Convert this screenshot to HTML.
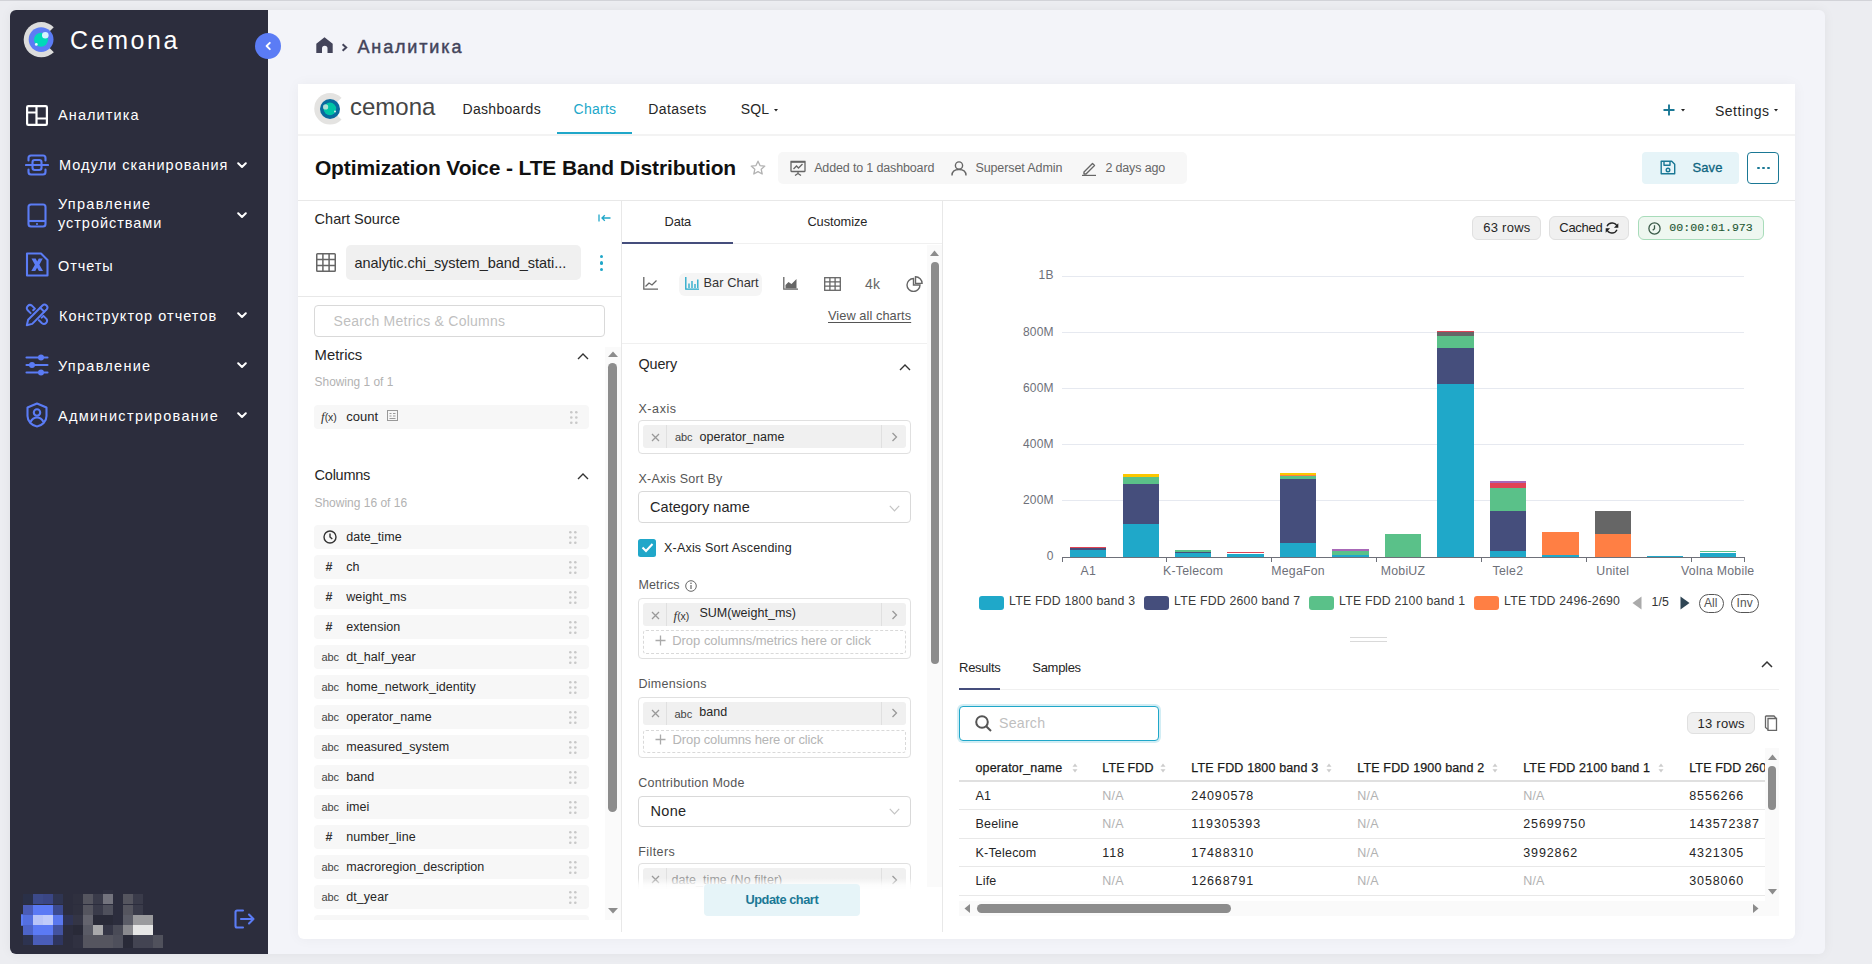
<!DOCTYPE html>
<html><head><meta charset="utf-8"><title>Cemona - Chart</title>
<style>
*{box-sizing:border-box;margin:0;padding:0}
html,body{width:1872px;height:964px;overflow:hidden}
body{background:#ecedf1;font-family:"Liberation Sans",sans-serif;position:relative}
.a{position:absolute}
.t{position:absolute;white-space:nowrap}
</style></head><body>
<div class="a" style="left:0px;top:0px;width:1872px;height:1px;background:#d2d3d8;"></div>
<div class="a" style="left:10px;top:10px;width:1815px;height:944px;background:#f3f4f9;border-radius:6px;box-shadow:0 0 12px rgba(0,0,0,0.05);"></div>
<div class="a" style="left:10px;top:10px;width:258px;height:944px;background:#2c2d3d;border-radius:6px 0 0 6px;"></div>
<svg class="a" style="left:20px;top:20px;" width="42" height="40" viewBox="0 0 42 40"><circle cx="21.3" cy="19.7" r="17.6" fill="#dcdcdc"/><path d="M21.3 19.7 L42 -1 L42 40.4 Z" fill="#2c2d3d"/>
<circle cx="21.1" cy="19.6" r="12.4" fill="#5b7cf5"/><circle cx="21" cy="19.8" r="7" fill="#00d9b9"/>
<circle cx="25.3" cy="15.3" r="3.3" fill="#d4f3ff"/><circle cx="16.3" cy="24.4" r="1.4" fill="#e6fbff"/></svg>
<div class="t" style="left:70px;top:28.04px;font-size:25px;line-height:25px;color:#ffffff;letter-spacing:2.6px;">Cemona</div>
<svg class="a" style="left:26px;top:105px;" width="22" height="21" viewBox="0 0 22 21"><g fill="none" stroke="#fff" stroke-width="2.2" stroke-linejoin="round"><rect x="1.1" y="1.1" width="19.8" height="18.8" rx="1.2"/><path d="M10.5 1.1v18.8M10.5 13.5h10.4M1.1 7.5h9.4"/></g></svg>
<div class="t" style="left:58px;top:108.13px;font-size:14.5px;line-height:14.5px;color:#fff;letter-spacing:1.1px;">Аналитика</div>
<svg class="a" style="left:25px;top:154px;" width="24" height="22" viewBox="0 0 24 22"><g fill="none" stroke="#5b7cf5" stroke-width="2.1" stroke-linecap="round" stroke-linejoin="round"><path d="M3.5 6.5V4a2.5 2.5 0 0 1 2.5-2.5h12A2.5 2.5 0 0 1 20.5 4v2.5M3.5 15.5V18a2.5 2.5 0 0 0 2.5 2.5h12a2.5 2.5 0 0 0 2.5-2.5v-2.5"/><rect x="7.5" y="6" width="9" height="10" rx="2.2"/><path d="M1 11h22"/></g></svg>
<div class="t" style="left:59px;top:158.23px;font-size:14.5px;line-height:14.5px;color:#fff;letter-spacing:1.04px;">Модули сканирования</div>
<svg class="a" style="left:237px;top:162px;" width="10" height="7" viewBox="0 0 10 7"><path d="M1.2 1.2L5 5 8.8 1.2" fill="none" stroke="#fff" stroke-width="2" stroke-linecap="round" stroke-linejoin="round"/></svg>
<svg class="a" style="left:27px;top:203px;" width="20" height="25" viewBox="0 0 20 25"><g fill="none" stroke="#5b7cf5" stroke-width="2.1" stroke-linejoin="round"><rect x="1.5" y="1.5" width="17" height="22" rx="2.5"/><path d="M1.5 18h17"/></g><circle cx="10" cy="21" r="1.1" fill="#5b7cf5"/></svg>
<div class="t" style="left:58px;top:197.23px;font-size:14.5px;line-height:14.5px;color:#fff;letter-spacing:1.28px;">Управление</div>
<div class="t" style="left:58px;top:216.33px;font-size:14.5px;line-height:14.5px;color:#fff;letter-spacing:0.96px;">устройствами</div>
<svg class="a" style="left:237px;top:212px;" width="10" height="7" viewBox="0 0 10 7"><path d="M1.2 1.2L5 5 8.8 1.2" fill="none" stroke="#fff" stroke-width="2" stroke-linecap="round" stroke-linejoin="round"/></svg>
<svg class="a" style="left:25px;top:252px;" width="24" height="25" viewBox="0 0 24 25"><g fill="none" stroke="#5b7cf5" stroke-width="2.1" stroke-linejoin="round"><path d="M2 1.5h14l6.5 6.5v15.5H2z"/></g><path d="M6.5 6.5h4.2l1.5 3 1.6-3h4l-3.4 6.2 3.6 6.3h-4.1l-1.8-3.3-1.8 3.3H6.3l3.6-6.3z" fill="#5b7cf5"/></svg>
<div class="t" style="left:58px;top:258.53px;font-size:14.5px;line-height:14.5px;color:#fff;letter-spacing:0.9px;">Отчеты</div>
<svg class="a" style="left:25px;top:303px;" width="24" height="24" viewBox="0 0 24 24"><g fill="none" stroke="#5b7cf5" stroke-width="2" stroke-linecap="round" stroke-linejoin="round"><path d="M1.8 22.2L3.13 16.77L17.45 2.45A2.9 2.9 0 0 1 21.55 6.55L7.23 20.87Z"/><path d="M15.19 4.71L19.29 8.81"/><path d="M5.6 10.1L2.5 7A3.15 3.15 0 0 1 6.9 2.6L9.9 5.6L8.2 7.3"/><path d="M13.9 17.2L17 20.3A3.15 3.15 0 0 0 21.4 15.9L18.4 12.9L16.7 14.6"/></g></svg>
<div class="t" style="left:59px;top:308.73px;font-size:14.5px;line-height:14.5px;color:#fff;letter-spacing:1.04px;">Конструктор отчетов</div>
<svg class="a" style="left:237px;top:312px;" width="10" height="7" viewBox="0 0 10 7"><path d="M1.2 1.2L5 5 8.8 1.2" fill="none" stroke="#fff" stroke-width="2" stroke-linecap="round" stroke-linejoin="round"/></svg>
<svg class="a" style="left:25px;top:354px;" width="24" height="22" viewBox="0 0 24 22"><g fill="none" stroke="#5b7cf5" stroke-width="2.1" stroke-linecap="round"><path d="M1.5 3.5h21M1.5 11h21M1.5 18.5h21"/></g><g fill="#5b7cf5"><circle cx="16" cy="3.5" r="3"/><circle cx="7" cy="11" r="3"/><circle cx="16" cy="18.5" r="3"/></g></svg>
<div class="t" style="left:58px;top:358.73px;font-size:14.5px;line-height:14.5px;color:#fff;letter-spacing:1.28px;">Управление</div>
<svg class="a" style="left:237px;top:362px;" width="10" height="7" viewBox="0 0 10 7"><path d="M1.2 1.2L5 5 8.8 1.2" fill="none" stroke="#fff" stroke-width="2" stroke-linecap="round" stroke-linejoin="round"/></svg>
<svg class="a" style="left:26px;top:402px;" width="22" height="26" viewBox="0 0 22 26"><g fill="none" stroke="#5b7cf5" stroke-width="2.1" stroke-linejoin="round"><path d="M11 1.5L20.5 5.5v8.5c0 5.5-4.5 9.5-9.5 10.5C6 23.5 1.5 19.5 1.5 14V5.5z"/><circle cx="11" cy="10.5" r="3.2"/><path d="M4.5 20c1.5-3 3.8-4.5 6.5-4.5s5 1.5 6.5 4.5"/></g></svg>
<div class="t" style="left:58px;top:408.73px;font-size:14.5px;line-height:14.5px;color:#fff;letter-spacing:1.34px;">Администрирование</div>
<svg class="a" style="left:237px;top:412px;" width="10" height="7" viewBox="0 0 10 7"><path d="M1.2 1.2L5 5 8.8 1.2" fill="none" stroke="#fff" stroke-width="2" stroke-linecap="round" stroke-linejoin="round"/></svg>
<div class="a" style="left:23px;top:894.3px;width:10px;height:10.2px;background:#2a3048;"></div>
<div class="a" style="left:33px;top:894.3px;width:10px;height:10.2px;background:#3c4a8a;"></div>
<div class="a" style="left:43px;top:894.3px;width:10px;height:10.2px;background:#3a4685;"></div>
<div class="a" style="left:53px;top:894.3px;width:10px;height:10.2px;background:#2f3552;"></div>
<div class="a" style="left:23px;top:904.5px;width:10px;height:10.1px;background:#4a5cb8;"></div>
<div class="a" style="left:33px;top:904.5px;width:10px;height:10.1px;background:#5b7af5;"></div>
<div class="a" style="left:43px;top:904.5px;width:10px;height:10.1px;background:#5b7af5;"></div>
<div class="a" style="left:53px;top:904.5px;width:10px;height:10.1px;background:#3b4a90;"></div>
<div class="a" style="left:23px;top:914.6px;width:10px;height:10.0px;background:#5470e0;"></div>
<div class="a" style="left:33px;top:914.6px;width:10px;height:10.0px;background:#b8c4f8;"></div>
<div class="a" style="left:43px;top:914.6px;width:10px;height:10.0px;background:#c0cbfa;"></div>
<div class="a" style="left:53px;top:914.6px;width:10px;height:10.0px;background:#5a78ef;"></div>
<div class="a" style="left:23px;top:924.6px;width:10px;height:10.1px;background:#4d64c8;"></div>
<div class="a" style="left:33px;top:924.6px;width:10px;height:10.1px;background:#5b7af5;"></div>
<div class="a" style="left:43px;top:924.6px;width:10px;height:10.1px;background:#5b7af5;"></div>
<div class="a" style="left:53px;top:924.6px;width:10px;height:10.1px;background:#4353a0;"></div>
<div class="a" style="left:23px;top:934.7px;width:10px;height:10.1px;background:#2d3350;"></div>
<div class="a" style="left:33px;top:934.7px;width:10px;height:10.1px;background:#4a5db8;"></div>
<div class="a" style="left:43px;top:934.7px;width:10px;height:10.1px;background:#4a5db8;"></div>
<div class="a" style="left:53px;top:934.7px;width:10px;height:10.1px;background:#2f3660;"></div>
<div class="a" style="left:63px;top:914.6px;width:10px;height:10px;background:#2f3455;"></div>
<div class="a" style="left:21px;top:914px;width:1.6px;height:12px;background:#5b7cf5;border-radius:1px;"></div>
<div class="a" style="left:73px;top:894.3px;width:10px;height:10.2px;background:#2f303f;"></div>
<div class="a" style="left:73px;top:904.5px;width:10px;height:10.1px;background:#2f303f;"></div>
<div class="a" style="left:73px;top:914.6px;width:10px;height:10.0px;background:#343545;"></div>
<div class="a" style="left:73px;top:924.6px;width:10px;height:10.1px;background:#292a38;"></div>
<div class="a" style="left:73px;top:934.7px;width:10px;height:13.1px;background:#303141;"></div>
<div class="a" style="left:83px;top:894.3px;width:10px;height:10.2px;background:#55555f;"></div>
<div class="a" style="left:83px;top:904.5px;width:10px;height:10.1px;background:#55555f;"></div>
<div class="a" style="left:83px;top:914.6px;width:10px;height:10.0px;background:#64646e;"></div>
<div class="a" style="left:83px;top:924.6px;width:10px;height:10.1px;background:#5a5b66;"></div>
<div class="a" style="left:83px;top:934.7px;width:10px;height:13.1px;background:#55555f;"></div>
<div class="a" style="left:93px;top:894.3px;width:10px;height:10.2px;background:#3a3b4a;"></div>
<div class="a" style="left:93px;top:904.5px;width:10px;height:10.1px;background:#3a3b4a;"></div>
<div class="a" style="left:93px;top:914.6px;width:10px;height:10.0px;background:#292a38;"></div>
<div class="a" style="left:93px;top:924.6px;width:10px;height:10.1px;background:#a9a9ab;"></div>
<div class="a" style="left:93px;top:934.7px;width:10px;height:13.1px;background:#55555f;"></div>
<div class="a" style="left:103px;top:894.3px;width:10px;height:10.2px;background:#73737d;"></div>
<div class="a" style="left:103px;top:904.5px;width:10px;height:10.1px;background:#4f505c;"></div>
<div class="a" style="left:103px;top:914.6px;width:10px;height:10.0px;background:#292a38;"></div>
<div class="a" style="left:103px;top:924.6px;width:10px;height:10.1px;background:#353646;"></div>
<div class="a" style="left:103px;top:934.7px;width:10px;height:13.1px;background:#55555f;"></div>
<div class="a" style="left:113px;top:924.6px;width:10px;height:10.1px;background:#4a4b57;"></div>
<div class="a" style="left:113px;top:934.7px;width:10px;height:13.1px;background:#4e4f5b;"></div>
<div class="a" style="left:123px;top:894.3px;width:10px;height:10.2px;background:#55555f;"></div>
<div class="a" style="left:123px;top:904.5px;width:10px;height:10.1px;background:#55555f;"></div>
<div class="a" style="left:123px;top:914.6px;width:10px;height:10.0px;background:#5b5c67;"></div>
<div class="a" style="left:123px;top:924.6px;width:10px;height:10.1px;background:#8a8a8f;"></div>
<div class="a" style="left:123px;top:934.7px;width:10px;height:13.1px;background:#292a38;"></div>
<div class="a" style="left:133px;top:894.3px;width:10px;height:10.2px;background:#3a3b4a;"></div>
<div class="a" style="left:133px;top:904.5px;width:10px;height:10.1px;background:#3a3b4a;"></div>
<div class="a" style="left:133px;top:914.6px;width:10px;height:10.0px;background:#9a9a9d;"></div>
<div class="a" style="left:133px;top:924.6px;width:10px;height:10.1px;background:#e6e6e6;"></div>
<div class="a" style="left:133px;top:934.7px;width:10px;height:13.1px;background:#434452;"></div>
<div class="a" style="left:143px;top:914.6px;width:10px;height:10.0px;background:#9a9a9d;"></div>
<div class="a" style="left:143px;top:924.6px;width:10px;height:10.1px;background:#e6e6e6;"></div>
<div class="a" style="left:143px;top:934.7px;width:10px;height:13.1px;background:#434452;"></div>
<div class="a" style="left:153px;top:934.7px;width:10px;height:13.1px;background:#50515c;"></div>
<div class="a" style="left:103px;top:890.3px;width:10px;height:4px;background:#303141;"></div>
<svg class="a" style="left:234px;top:909px;" width="21" height="20" viewBox="0 0 21 20"><g fill="none" stroke="#5b7cf5" stroke-width="2.1" stroke-linecap="round" stroke-linejoin="round"><path d="M9 1.5H3a1.5 1.5 0 0 0-1.5 1.5v14A1.5 1.5 0 0 0 3 18.5h6"/><path d="M7 10h12.5M15 5.5l4.5 4.5-4.5 4.5"/></g></svg>
<div class="a" style="left:255px;top:33px;width:26px;height:26px;border-radius:50%;background:#5b7cf5"></div>
<svg class="a" style="left:264px;top:41px;" width="8" height="10" viewBox="0 0 8 10"><path d="M5.8 1.8L2.6 5l3.2 3.2" fill="none" stroke="#fff" stroke-width="1.9" stroke-linecap="round" stroke-linejoin="round"/></svg>
<svg class="a" style="left:315.5px;top:37px;" width="17" height="16" viewBox="0 0 17 16"><path d="M8.5 0.3L16.7 6.8V15.9h-5.2v-4.4a2.75 2.75 0 0 0-5.5 0v4.4H0.3V6.8z" fill="#43445a"/></svg>
<svg class="a" style="left:341px;top:43px;" width="7" height="9" viewBox="0 0 7 9"><path d="M1.6 1.2l3.6 3.3-3.6 3.3" fill="none" stroke="#43445a" stroke-width="2"/></svg>
<div class="t" style="left:357.5px;top:38.16px;font-size:18px;line-height:18px;color:#43445a;letter-spacing:1.85px;-webkit-text-stroke:0.45px #43445a;">Аналитика</div>
<div class="a" style="left:298px;top:84px;width:1497px;height:855px;background:#ffffff;border-radius:0 0 6px 6px;box-shadow:0 0 14px rgba(0,0,0,0.045);"></div>
<div class="a" style="left:298px;top:134px;width:1497px;height:2px;background:#f3f3f3;"></div>
<svg class="a" style="left:310px;top:90px;" width="40" height="38" viewBox="0 0 40 38"><circle cx="20" cy="18.75" r="15.75" fill="#e4e3e1"/><path d="M20 18.75 L40 0 L40 37.5 Z" fill="#ffffff"/>
<circle cx="20" cy="19" r="10" fill="#0a6a9e"/><circle cx="19.9" cy="18.85" r="6.3" fill="#00c4a6"/><circle cx="15.6" cy="16.9" r="2.6" fill="#c4e4da" opacity="0.9"/><circle cx="25" cy="21.4" r="1" fill="#d8f0ea"/></svg>
<div class="t" style="left:350px;top:94.68px;font-size:24px;line-height:24px;color:#454545;">cemona</div>
<div class="t" style="left:462.5px;top:102.15px;font-size:14px;line-height:14px;color:#262626;letter-spacing:0.3px;">Dashboards</div>
<div class="t" style="left:573.6px;top:102.15px;font-size:14px;line-height:14px;color:#20a7c9;letter-spacing:0.25px;">Charts</div>
<div class="a" style="left:557px;top:132px;width:75px;height:2px;background:#20a7c9;"></div>
<div class="t" style="left:648.3px;top:102.15px;font-size:14px;line-height:14px;color:#262626;letter-spacing:0.4px;">Datasets</div>
<div class="t" style="left:740.7px;top:102.15px;font-size:14px;line-height:14px;color:#262626;letter-spacing:0.2px;">SQL</div>
<svg class="a" style="left:773.5px;top:108.5px;" width="4" height="3" viewBox="0 0 4 3"><path d="M0 0h4L2 2.6z" fill="#222"/></svg>
<svg class="a" style="left:1663px;top:104px;" width="12" height="12" viewBox="0 0 12 12"><path d="M6 0.5v11M0.5 6h11" stroke="#1a7895" stroke-width="1.9"/></svg>
<svg class="a" style="left:1680.5px;top:108.5px;" width="4" height="3" viewBox="0 0 4 3"><path d="M0 0h4L2 2.6z" fill="#222"/></svg>
<div class="t" style="left:1715px;top:103.65px;font-size:14px;line-height:14px;color:#262626;letter-spacing:0.5px;">Settings</div>
<svg class="a" style="left:1774px;top:108.5px;" width="4" height="3" viewBox="0 0 4 3"><path d="M0 0h4L2 2.6z" fill="#222"/></svg>
<div class="t" style="left:314.9px;top:157.12px;font-size:21px;line-height:21px;color:#111;font-weight:700;letter-spacing:-0.12px;">Optimization Voice - LTE Band Distribution</div>
<svg class="a" style="left:750px;top:160px;" width="16" height="16" viewBox="0 0 16 16"><path d="M8 1.2l2 4.4 4.8.5-3.6 3.2 1 4.7L8 11.6l-4.2 2.4 1-4.7L1.2 6.1 6 5.6z" fill="none" stroke="#b2b2b2" stroke-width="1.3" stroke-linejoin="round"/></svg>
<div class="a" style="left:778px;top:152px;width:409px;height:32px;background:#f7f7f7;border-radius:5px;"></div>
<svg class="a" style="left:790px;top:160px;" width="16" height="16" viewBox="0 0 16 16"><g fill="none" stroke="#666" stroke-width="1.3"><rect x="1" y="2" width="14" height="9.5" rx="0.5"/><path d="M0.5 1.5h15M8 11.5v2.5M5 15.5l3-2 3 2M3.5 9l3-3 2 2 4-4"/></g></svg>
<div class="t" style="left:814.2px;top:161.92px;font-size:12.5px;line-height:12.5px;color:#666;letter-spacing:-0.15px;">Added to 1 dashboard</div>
<svg class="a" style="left:951px;top:161px;" width="16" height="15" viewBox="0 0 16 15"><g fill="none" stroke="#666" stroke-width="1.4"><circle cx="8" cy="4.5" r="3.6"/><path d="M1 14.5c0-4 3-6 7-6s7 2 7 6"/></g></svg>
<div class="t" style="left:975.4px;top:161.92px;font-size:12.5px;line-height:12.5px;color:#666;letter-spacing:-0.1px;">Superset Admin</div>
<svg class="a" style="left:1081px;top:161px;" width="16" height="15" viewBox="0 0 16 15"><g fill="none" stroke="#666" stroke-width="1.4" stroke-linejoin="round"><path d="M3 11l8.5-8.5 2 2L5 13H3z"/><path d="M1 14.5h14"/></g></svg>
<div class="t" style="left:1105.4px;top:161.92px;font-size:12.5px;line-height:12.5px;color:#666;letter-spacing:-0.15px;">2 days ago</div>
<div class="a" style="left:1642px;top:152px;width:97px;height:32px;background:#e6f4f8;border-radius:4px;"></div>
<svg class="a" style="left:1660px;top:160px;" width="16" height="15" viewBox="0 0 16 15"><g fill="none" stroke="#1a7895" stroke-width="1.4" stroke-linejoin="round"><path d="M1.2 1.2h10.5l3 3v9.6H1.2z"/><path d="M4 1.2v4h6v-4"/><circle cx="8" cy="10" r="1.8"/></g></svg>
<div class="t" style="left:1692.5px;top:161.20px;font-size:13px;line-height:13px;color:#0e6580;letter-spacing:0.1px;-webkit-text-stroke:0.3px #0e6580;">Save</div>
<div class="a" style="left:1747px;top:152px;width:32px;height:32px;background:#fff;border:1px solid #1a7895;border-radius:4px;"></div>
<div class="a" style="left:1757px;top:166.5px;width:2.5px;height:2.5px;background:#1a7895;border-radius:1px;"></div>
<div class="a" style="left:1762px;top:166.5px;width:2.5px;height:2.5px;background:#1a7895;border-radius:1px;"></div>
<div class="a" style="left:1767px;top:166.5px;width:2.5px;height:2.5px;background:#1a7895;border-radius:1px;"></div>
<div class="a" style="left:298px;top:200px;width:1497px;height:1px;background:#e8e8e8;"></div>
<div class="a" style="left:621px;top:200px;width:1px;height:732px;background:#e8e8e8;"></div>
<div class="a" style="left:942px;top:200px;width:1px;height:732px;background:#e8e8e8;"></div>
<div class="t" style="left:314.6px;top:211.83px;font-size:14.5px;line-height:14.5px;color:#262626;">Chart Source</div>
<svg class="a" style="left:598px;top:214px;" width="13" height="8" viewBox="0 0 13 8"><g fill="none" stroke="#20a7c9" stroke-width="1.3"><path d="M1 0.5v7M12.5 4H4M6.8 1.2L4 4l2.8 2.8"/></g></svg>
<svg class="a" style="left:316px;top:253px;" width="20" height="19" viewBox="0 0 20 19"><g fill="none" stroke="#666" stroke-width="1.5"><rect x="0.75" y="0.75" width="18.5" height="17.5" rx="0.8"/><path d="M0.8 6.6h18.5M0.8 12.4h18.5M6.9 0.8v17.5M13.1 0.8v17.5"/></g></svg>
<div class="a" style="left:346px;top:245px;width:235px;height:35px;background:#f0f0f0;border-radius:5px;"></div>
<div class="t" style="left:354.5px;top:255.53px;font-size:14.5px;line-height:14.5px;color:#262626;letter-spacing:-0.03px;">analytic.chi_system_band_stati...</div>
<div class="a" style="left:599.5px;top:254.9px;width:3.2px;height:3.2px;background:#20a7c9;border-radius:2px;"></div>
<div class="a" style="left:599.5px;top:261.4px;width:3.2px;height:3.2px;background:#20a7c9;border-radius:2px;"></div>
<div class="a" style="left:599.5px;top:267.9px;width:3.2px;height:3.2px;background:#20a7c9;border-radius:2px;"></div>
<div class="a" style="left:298px;top:296px;width:323px;height:1px;background:#e8e8e8;"></div>
<div class="a" style="left:314px;top:305px;width:291px;height:32px;background:#fff;border:1px solid #d9d9d9;border-radius:4px;"></div>
<div class="t" style="left:333.6px;top:314.15px;font-size:14px;line-height:14px;color:#bfbfbf;letter-spacing:0.25px;">Search Metrics &amp; Columns</div>
<div class="t" style="left:314.6px;top:347.57px;font-size:14.8px;line-height:14.8px;color:#262626;">Metrics</div>
<svg class="a" style="left:577px;top:352px;" width="12" height="8" viewBox="0 0 12 8"><path d="M1 7L6 2l5 5" fill="none" stroke="#333" stroke-width="1.4"/></svg>
<div class="t" style="left:314.6px;top:377.23px;font-size:11.9px;line-height:11.9px;color:#b2b2b2;">Showing 1 of 1</div>
<div class="a" style="left:314px;top:405px;width:275px;height:24px;background:#f7f7f7;border-radius:4px;"></div>
<div class="t" style="left:321px;top:411.14px;font-size:12px;line-height:12px;color:#333;"><i style="font-family:'Liberation Serif';font-size:13px">f</i><span style="font-size:10.5px">(x)</span></div>
<div class="t" style="left:346.2px;top:410.30px;font-size:13px;line-height:13px;color:#262626;">count</div>
<svg class="a" style="left:387px;top:410px;" width="11" height="11" viewBox="0 0 11 11"><g fill="none" stroke="#999" stroke-width="1"><rect x="0.5" y="0.5" width="10" height="10"/><path d="M2.5 3.5h2M2.5 6h2M6 3.5h2.5M6 6h2.5M2.5 8.5h6"/></g></svg>
<svg class="a" style="left:569.6px;top:411px;" width="8" height="13" viewBox="0 0 8 13"><circle cx="1.3" cy="1.3" r="1.3" fill="#c8c8c8"/><circle cx="6.3" cy="1.3" r="1.3" fill="#c8c8c8"/><circle cx="1.3" cy="6.5" r="1.3" fill="#c8c8c8"/><circle cx="6.3" cy="6.5" r="1.3" fill="#c8c8c8"/><circle cx="1.3" cy="11.700000000000001" r="1.3" fill="#c8c8c8"/><circle cx="6.3" cy="11.700000000000001" r="1.3" fill="#c8c8c8"/></svg>
<div class="t" style="left:314.6px;top:468.13px;font-size:14.5px;line-height:14.5px;color:#262626;letter-spacing:-0.25px;">Columns</div>
<svg class="a" style="left:577px;top:472px;" width="12" height="8" viewBox="0 0 12 8"><path d="M1 7L6 2l5 5" fill="none" stroke="#333" stroke-width="1.4"/></svg>
<div class="t" style="left:314.4px;top:496.94px;font-size:12px;line-height:12px;color:#b2b2b2;">Showing 16 of 16</div>
<div class="a" style="left:314px;top:525px;width:275px;height:24px;background:#f7f7f7;border-radius:4px;"></div>
<svg class="a" style="left:323px;top:530px;" width="14" height="14" viewBox="0 0 14 14"><g fill="none" stroke="#333" stroke-width="1.4"><circle cx="7" cy="7" r="6"/><path d="M7 3.5V7l2.3 2"/></g></svg>
<div class="t" style="left:346.3px;top:530.72px;font-size:12.5px;line-height:12.5px;color:#262626;letter-spacing:0.05px;">date_time</div>
<svg class="a" style="left:569.3px;top:531px;" width="8" height="13" viewBox="0 0 8 13"><circle cx="1.3" cy="1.3" r="1.3" fill="#c8c8c8"/><circle cx="6.3" cy="1.3" r="1.3" fill="#c8c8c8"/><circle cx="1.3" cy="6.5" r="1.3" fill="#c8c8c8"/><circle cx="6.3" cy="6.5" r="1.3" fill="#c8c8c8"/><circle cx="1.3" cy="11.700000000000001" r="1.3" fill="#c8c8c8"/><circle cx="6.3" cy="11.700000000000001" r="1.3" fill="#c8c8c8"/></svg>
<div class="a" style="left:314px;top:555px;width:275px;height:24px;background:#f7f7f7;border-radius:4px;"></div>
<div class="t" style="left:325.6px;top:560.72px;font-size:12.5px;line-height:12.5px;color:#333;font-weight:700;">#</div>
<div class="t" style="left:346.3px;top:560.72px;font-size:12.5px;line-height:12.5px;color:#262626;letter-spacing:0.05px;">ch</div>
<svg class="a" style="left:569.3px;top:561px;" width="8" height="13" viewBox="0 0 8 13"><circle cx="1.3" cy="1.3" r="1.3" fill="#c8c8c8"/><circle cx="6.3" cy="1.3" r="1.3" fill="#c8c8c8"/><circle cx="1.3" cy="6.5" r="1.3" fill="#c8c8c8"/><circle cx="6.3" cy="6.5" r="1.3" fill="#c8c8c8"/><circle cx="1.3" cy="11.700000000000001" r="1.3" fill="#c8c8c8"/><circle cx="6.3" cy="11.700000000000001" r="1.3" fill="#c8c8c8"/></svg>
<div class="a" style="left:314px;top:585px;width:275px;height:24px;background:#f7f7f7;border-radius:4px;"></div>
<div class="t" style="left:325.6px;top:590.72px;font-size:12.5px;line-height:12.5px;color:#333;font-weight:700;">#</div>
<div class="t" style="left:346.3px;top:590.72px;font-size:12.5px;line-height:12.5px;color:#262626;letter-spacing:0.05px;">weight_ms</div>
<svg class="a" style="left:569.3px;top:591px;" width="8" height="13" viewBox="0 0 8 13"><circle cx="1.3" cy="1.3" r="1.3" fill="#c8c8c8"/><circle cx="6.3" cy="1.3" r="1.3" fill="#c8c8c8"/><circle cx="1.3" cy="6.5" r="1.3" fill="#c8c8c8"/><circle cx="6.3" cy="6.5" r="1.3" fill="#c8c8c8"/><circle cx="1.3" cy="11.700000000000001" r="1.3" fill="#c8c8c8"/><circle cx="6.3" cy="11.700000000000001" r="1.3" fill="#c8c8c8"/></svg>
<div class="a" style="left:314px;top:615px;width:275px;height:24px;background:#f7f7f7;border-radius:4px;"></div>
<div class="t" style="left:325.6px;top:620.72px;font-size:12.5px;line-height:12.5px;color:#333;font-weight:700;">#</div>
<div class="t" style="left:346.3px;top:620.72px;font-size:12.5px;line-height:12.5px;color:#262626;letter-spacing:0.05px;">extension</div>
<svg class="a" style="left:569.3px;top:621px;" width="8" height="13" viewBox="0 0 8 13"><circle cx="1.3" cy="1.3" r="1.3" fill="#c8c8c8"/><circle cx="6.3" cy="1.3" r="1.3" fill="#c8c8c8"/><circle cx="1.3" cy="6.5" r="1.3" fill="#c8c8c8"/><circle cx="6.3" cy="6.5" r="1.3" fill="#c8c8c8"/><circle cx="1.3" cy="11.700000000000001" r="1.3" fill="#c8c8c8"/><circle cx="6.3" cy="11.700000000000001" r="1.3" fill="#c8c8c8"/></svg>
<div class="a" style="left:314px;top:645px;width:275px;height:24px;background:#f7f7f7;border-radius:4px;"></div>
<div class="t" style="left:321.4px;top:651.99px;font-size:11px;line-height:11px;color:#444;letter-spacing:-0.1px;">abc</div>
<div class="t" style="left:346.3px;top:650.72px;font-size:12.5px;line-height:12.5px;color:#262626;letter-spacing:0.05px;">dt_half_year</div>
<svg class="a" style="left:569.3px;top:651px;" width="8" height="13" viewBox="0 0 8 13"><circle cx="1.3" cy="1.3" r="1.3" fill="#c8c8c8"/><circle cx="6.3" cy="1.3" r="1.3" fill="#c8c8c8"/><circle cx="1.3" cy="6.5" r="1.3" fill="#c8c8c8"/><circle cx="6.3" cy="6.5" r="1.3" fill="#c8c8c8"/><circle cx="1.3" cy="11.700000000000001" r="1.3" fill="#c8c8c8"/><circle cx="6.3" cy="11.700000000000001" r="1.3" fill="#c8c8c8"/></svg>
<div class="a" style="left:314px;top:675px;width:275px;height:24px;background:#f7f7f7;border-radius:4px;"></div>
<div class="t" style="left:321.4px;top:681.99px;font-size:11px;line-height:11px;color:#444;letter-spacing:-0.1px;">abc</div>
<div class="t" style="left:346.3px;top:680.72px;font-size:12.5px;line-height:12.5px;color:#262626;letter-spacing:0.05px;">home_network_identity</div>
<svg class="a" style="left:569.3px;top:681px;" width="8" height="13" viewBox="0 0 8 13"><circle cx="1.3" cy="1.3" r="1.3" fill="#c8c8c8"/><circle cx="6.3" cy="1.3" r="1.3" fill="#c8c8c8"/><circle cx="1.3" cy="6.5" r="1.3" fill="#c8c8c8"/><circle cx="6.3" cy="6.5" r="1.3" fill="#c8c8c8"/><circle cx="1.3" cy="11.700000000000001" r="1.3" fill="#c8c8c8"/><circle cx="6.3" cy="11.700000000000001" r="1.3" fill="#c8c8c8"/></svg>
<div class="a" style="left:314px;top:705px;width:275px;height:24px;background:#f7f7f7;border-radius:4px;"></div>
<div class="t" style="left:321.4px;top:711.99px;font-size:11px;line-height:11px;color:#444;letter-spacing:-0.1px;">abc</div>
<div class="t" style="left:346.3px;top:710.72px;font-size:12.5px;line-height:12.5px;color:#262626;letter-spacing:0.05px;">operator_name</div>
<svg class="a" style="left:569.3px;top:711px;" width="8" height="13" viewBox="0 0 8 13"><circle cx="1.3" cy="1.3" r="1.3" fill="#c8c8c8"/><circle cx="6.3" cy="1.3" r="1.3" fill="#c8c8c8"/><circle cx="1.3" cy="6.5" r="1.3" fill="#c8c8c8"/><circle cx="6.3" cy="6.5" r="1.3" fill="#c8c8c8"/><circle cx="1.3" cy="11.700000000000001" r="1.3" fill="#c8c8c8"/><circle cx="6.3" cy="11.700000000000001" r="1.3" fill="#c8c8c8"/></svg>
<div class="a" style="left:314px;top:735px;width:275px;height:24px;background:#f7f7f7;border-radius:4px;"></div>
<div class="t" style="left:321.4px;top:741.99px;font-size:11px;line-height:11px;color:#444;letter-spacing:-0.1px;">abc</div>
<div class="t" style="left:346.3px;top:740.72px;font-size:12.5px;line-height:12.5px;color:#262626;letter-spacing:0.05px;">measured_system</div>
<svg class="a" style="left:569.3px;top:741px;" width="8" height="13" viewBox="0 0 8 13"><circle cx="1.3" cy="1.3" r="1.3" fill="#c8c8c8"/><circle cx="6.3" cy="1.3" r="1.3" fill="#c8c8c8"/><circle cx="1.3" cy="6.5" r="1.3" fill="#c8c8c8"/><circle cx="6.3" cy="6.5" r="1.3" fill="#c8c8c8"/><circle cx="1.3" cy="11.700000000000001" r="1.3" fill="#c8c8c8"/><circle cx="6.3" cy="11.700000000000001" r="1.3" fill="#c8c8c8"/></svg>
<div class="a" style="left:314px;top:765px;width:275px;height:24px;background:#f7f7f7;border-radius:4px;"></div>
<div class="t" style="left:321.4px;top:771.99px;font-size:11px;line-height:11px;color:#444;letter-spacing:-0.1px;">abc</div>
<div class="t" style="left:346.3px;top:770.72px;font-size:12.5px;line-height:12.5px;color:#262626;letter-spacing:0.05px;">band</div>
<svg class="a" style="left:569.3px;top:771px;" width="8" height="13" viewBox="0 0 8 13"><circle cx="1.3" cy="1.3" r="1.3" fill="#c8c8c8"/><circle cx="6.3" cy="1.3" r="1.3" fill="#c8c8c8"/><circle cx="1.3" cy="6.5" r="1.3" fill="#c8c8c8"/><circle cx="6.3" cy="6.5" r="1.3" fill="#c8c8c8"/><circle cx="1.3" cy="11.700000000000001" r="1.3" fill="#c8c8c8"/><circle cx="6.3" cy="11.700000000000001" r="1.3" fill="#c8c8c8"/></svg>
<div class="a" style="left:314px;top:795px;width:275px;height:24px;background:#f7f7f7;border-radius:4px;"></div>
<div class="t" style="left:321.4px;top:801.99px;font-size:11px;line-height:11px;color:#444;letter-spacing:-0.1px;">abc</div>
<div class="t" style="left:346.3px;top:800.72px;font-size:12.5px;line-height:12.5px;color:#262626;letter-spacing:0.05px;">imei</div>
<svg class="a" style="left:569.3px;top:801px;" width="8" height="13" viewBox="0 0 8 13"><circle cx="1.3" cy="1.3" r="1.3" fill="#c8c8c8"/><circle cx="6.3" cy="1.3" r="1.3" fill="#c8c8c8"/><circle cx="1.3" cy="6.5" r="1.3" fill="#c8c8c8"/><circle cx="6.3" cy="6.5" r="1.3" fill="#c8c8c8"/><circle cx="1.3" cy="11.700000000000001" r="1.3" fill="#c8c8c8"/><circle cx="6.3" cy="11.700000000000001" r="1.3" fill="#c8c8c8"/></svg>
<div class="a" style="left:314px;top:825px;width:275px;height:24px;background:#f7f7f7;border-radius:4px;"></div>
<div class="t" style="left:325.6px;top:830.72px;font-size:12.5px;line-height:12.5px;color:#333;font-weight:700;">#</div>
<div class="t" style="left:346.3px;top:830.72px;font-size:12.5px;line-height:12.5px;color:#262626;letter-spacing:0.05px;">number_line</div>
<svg class="a" style="left:569.3px;top:831px;" width="8" height="13" viewBox="0 0 8 13"><circle cx="1.3" cy="1.3" r="1.3" fill="#c8c8c8"/><circle cx="6.3" cy="1.3" r="1.3" fill="#c8c8c8"/><circle cx="1.3" cy="6.5" r="1.3" fill="#c8c8c8"/><circle cx="6.3" cy="6.5" r="1.3" fill="#c8c8c8"/><circle cx="1.3" cy="11.700000000000001" r="1.3" fill="#c8c8c8"/><circle cx="6.3" cy="11.700000000000001" r="1.3" fill="#c8c8c8"/></svg>
<div class="a" style="left:314px;top:855px;width:275px;height:24px;background:#f7f7f7;border-radius:4px;"></div>
<div class="t" style="left:321.4px;top:861.99px;font-size:11px;line-height:11px;color:#444;letter-spacing:-0.1px;">abc</div>
<div class="t" style="left:346.3px;top:860.72px;font-size:12.5px;line-height:12.5px;color:#262626;letter-spacing:0.05px;">macroregion_description</div>
<svg class="a" style="left:569.3px;top:861px;" width="8" height="13" viewBox="0 0 8 13"><circle cx="1.3" cy="1.3" r="1.3" fill="#c8c8c8"/><circle cx="6.3" cy="1.3" r="1.3" fill="#c8c8c8"/><circle cx="1.3" cy="6.5" r="1.3" fill="#c8c8c8"/><circle cx="6.3" cy="6.5" r="1.3" fill="#c8c8c8"/><circle cx="1.3" cy="11.700000000000001" r="1.3" fill="#c8c8c8"/><circle cx="6.3" cy="11.700000000000001" r="1.3" fill="#c8c8c8"/></svg>
<div class="a" style="left:314px;top:885px;width:275px;height:24px;background:#f7f7f7;border-radius:4px;"></div>
<div class="t" style="left:321.4px;top:891.99px;font-size:11px;line-height:11px;color:#444;letter-spacing:-0.1px;">abc</div>
<div class="t" style="left:346.3px;top:890.72px;font-size:12.5px;line-height:12.5px;color:#262626;letter-spacing:0.05px;">dt_year</div>
<svg class="a" style="left:569.3px;top:891px;" width="8" height="13" viewBox="0 0 8 13"><circle cx="1.3" cy="1.3" r="1.3" fill="#c8c8c8"/><circle cx="6.3" cy="1.3" r="1.3" fill="#c8c8c8"/><circle cx="1.3" cy="6.5" r="1.3" fill="#c8c8c8"/><circle cx="6.3" cy="6.5" r="1.3" fill="#c8c8c8"/><circle cx="1.3" cy="11.700000000000001" r="1.3" fill="#c8c8c8"/><circle cx="6.3" cy="11.700000000000001" r="1.3" fill="#c8c8c8"/></svg>
<div class="a" style="left:314px;top:915px;width:275px;height:24px;background:#f7f7f7;border-radius:4px;clip-path:inset(0 0 19px 0);"></div>
<div class="a" style="left:605px;top:347px;width:16px;height:573px;background:#fafafa;"></div>
<svg class="a" style="left:608px;top:351px;" width="10" height="6" viewBox="0 0 10 6"><path d="M0 6L5 0.5 10 6z" fill="#8c8c8c"/></svg>
<div class="a" style="left:608px;top:363px;width:9px;height:449px;background:#8c8c8c;border-radius:5px;"></div>
<svg class="a" style="left:608px;top:908px;" width="10" height="6" viewBox="0 0 10 6"><path d="M0 0L5 5.5 10 0z" fill="#8c8c8c"/></svg>
<div class="t" style="left:664.5px;top:215.76px;font-size:12.8px;line-height:12.8px;color:#262626;letter-spacing:-0.1px;">Data</div>
<div class="t" style="left:807.4px;top:215.76px;font-size:12.8px;line-height:12.8px;color:#262626;letter-spacing:-0.05px;">Customize</div>
<div class="a" style="left:622px;top:243px;width:320px;height:1px;background:#f0f0f0;"></div>
<div class="a" style="left:622px;top:242px;width:111px;height:2.2px;background:#454e7c;"></div>
<div class="a" style="left:927px;top:245px;width:15px;height:642px;background:#fafafa;"></div>
<svg class="a" style="left:930px;top:250px;" width="9" height="6" viewBox="0 0 9 6"><path d="M0 6L4.5 0.5 9 6z" fill="#8c8c8c"/></svg>
<div class="a" style="left:930.5px;top:262px;width:8.5px;height:402px;background:#8c8c8c;border-radius:5px;"></div>
<svg class="a" style="left:643px;top:277px;" width="15" height="13" viewBox="0 0 15 13"><g fill="none" stroke="#666" stroke-width="1.3"><path d="M0.8 0v12.2H15"/><path d="M2.5 9.5l3.5-3.5 3 2 4.5-4.5"/></g></svg>
<div class="a" style="left:679px;top:272.5px;width:83px;height:23px;background:#f5f5f5;border-radius:6px;"></div>
<svg class="a" style="left:685px;top:277px;" width="14" height="13" viewBox="0 0 14 13"><g fill="none" stroke="#20a7c9" stroke-width="1.3"><path d="M0.8 0v12.2H14"/><path d="M4 11V6.5M7 11V4M10 11V7M12.8 11V2.5"/></g></svg>
<div class="t" style="left:703.5px;top:277.06px;font-size:12.8px;line-height:12.8px;color:#333;letter-spacing:0.05px;">Bar Chart</div>
<svg class="a" style="left:783px;top:277px;" width="15" height="13" viewBox="0 0 15 13"><path d="M0.8 0v12.2H15" fill="none" stroke="#666" stroke-width="1.3"/><path d="M2.5 11.5V8l3-3 3 2 5-5v9.5z" fill="#666"/></svg>
<svg class="a" style="left:824px;top:277px;" width="17" height="14" viewBox="0 0 17 14"><g fill="none" stroke="#666" stroke-width="1.3"><rect x="0.7" y="0.7" width="15.6" height="12.6"/><path d="M0.7 4.9h15.6M0.7 9.1h15.6M5.9 0.7v12.6M11.1 0.7v12.6"/></g></svg>
<div class="t" style="left:865px;top:277.45px;font-size:14px;line-height:14px;color:#666;letter-spacing:0.3px;">4k</div>
<svg class="a" style="left:906px;top:276px;" width="17" height="16" viewBox="0 0 17 16"><g fill="none" stroke="#666" stroke-width="1.4"><path d="M7.5 2.5A6.5 6.5 0 1 0 14 9H7.5z"/><path d="M9.5 0.8v6.6h6.6A6.6 6.6 0 0 0 9.5 0.8z"/></g></svg>
<div class="t" style="left:828px;top:310.16px;font-size:12.8px;line-height:12.8px;color:#555;letter-spacing:0.06px;text-decoration:underline;text-underline-offset:2px;">View all charts</div>
<div class="a" style="left:622px;top:343px;width:305px;height:1px;background:#f0f0f0;"></div>
<div class="t" style="left:638.4px;top:357.31px;font-size:14.4px;line-height:14.4px;color:#262626;letter-spacing:-0.1px;">Query</div>
<svg class="a" style="left:899px;top:363px;" width="12" height="8" viewBox="0 0 12 8"><path d="M1 7L6 2l5 5" fill="none" stroke="#333" stroke-width="1.4"/></svg>
<div class="t" style="left:638.4px;top:402.92px;font-size:12.5px;line-height:12.5px;color:#555;letter-spacing:0.6px;">X-axis</div>
<div class="a" style="left:638px;top:420px;width:273px;height:34px;background:#fff;border:1px solid #e0e0e0;border-radius:4px;"></div>
<div class="a" style="left:643px;top:425px;width:263px;height:23px;background:#f0f0f0;border-radius:3px;"></div>
<div class="a" style="left:666px;top:425px;width:1px;height:23px;background:#e0e0e0;"></div>
<div class="a" style="left:881px;top:425px;width:1px;height:23px;background:#e0e0e0;"></div>
<svg class="a" style="left:650.7px;top:432.5px;" width="9" height="9" viewBox="0 0 9 9"><path d="M1 1l7 7M8 1L1 8" stroke="#999" stroke-width="1.3"/></svg>
<svg class="a" style="left:890.8px;top:431.5px;" width="7" height="10" viewBox="0 0 7 10"><path d="M1.5 1l4 4-4 4" fill="none" stroke="#999" stroke-width="1.3"/></svg>
<div class="t" style="left:674.9px;top:432.29px;font-size:11px;line-height:11px;color:#444;letter-spacing:-0.1px;">abc</div>
<div class="t" style="left:699.6px;top:431.02px;font-size:12.5px;line-height:12.5px;color:#262626;">operator_name</div>
<div class="t" style="left:638.4px;top:472.92px;font-size:12.5px;line-height:12.5px;color:#555;letter-spacing:0.25px;">X-Axis Sort By</div>
<div class="a" style="left:638px;top:491px;width:273px;height:32px;background:#fff;border:1px solid #d9d9d9;border-radius:4px;"></div>
<div class="t" style="left:650px;top:500.13px;font-size:14.5px;line-height:14.5px;color:#262626;letter-spacing:0.05px;">Category name</div>
<svg class="a" style="left:889px;top:504.5px;" width="11" height="7" viewBox="0 0 11 7"><path d="M0.8 0.8L5.5 5.8 10.2 0.8" fill="none" stroke="#c4c4c4" stroke-width="1.2"/></svg>
<div class="a" style="left:638.4px;top:539px;width:17.5px;height:17.5px;background:#20a7c9;border-radius:2.5px;"></div>
<svg class="a" style="left:640.5px;top:542px;" width="13" height="11" viewBox="0 0 13 11"><path d="M1.5 5.5l3.5 3.5 6.5-7" fill="none" stroke="#fff" stroke-width="2"/></svg>
<div class="t" style="left:664px;top:541.82px;font-size:12.5px;line-height:12.5px;color:#262626;letter-spacing:0.2px;">X-Axis Sort Ascending</div>
<div class="t" style="left:638.4px;top:578.92px;font-size:12.5px;line-height:12.5px;color:#555;letter-spacing:0.15px;">Metrics</div>
<svg class="a" style="left:685px;top:579.5px;" width="12" height="12" viewBox="0 0 12 12"><g fill="none" stroke="#666" stroke-width="1"><circle cx="6" cy="6" r="5.3"/></g><path d="M6 5v4" stroke="#666" stroke-width="1.2"/><circle cx="6" cy="3.2" r="0.8" fill="#666"/></svg>
<div class="a" style="left:638px;top:598px;width:273px;height:61px;background:#fff;border:1px solid #e0e0e0;border-radius:4px;"></div>
<div class="a" style="left:643px;top:603px;width:263px;height:23px;background:#f0f0f0;border-radius:3px;"></div>
<div class="a" style="left:666px;top:603px;width:1px;height:23px;background:#e0e0e0;"></div>
<div class="a" style="left:881px;top:603px;width:1px;height:23px;background:#e0e0e0;"></div>
<svg class="a" style="left:650.7px;top:610.5px;" width="9" height="9" viewBox="0 0 9 9"><path d="M1 1l7 7M8 1L1 8" stroke="#999" stroke-width="1.3"/></svg>
<svg class="a" style="left:890.8px;top:609.5px;" width="7" height="10" viewBox="0 0 7 10"><path d="M1.5 1l4 4-4 4" fill="none" stroke="#999" stroke-width="1.3"/></svg>
<div class="t" style="left:673.5px;top:609.84px;font-size:12px;line-height:12px;color:#333;"><i style="font-family:'Liberation Serif';font-size:13px">f</i><span style="font-size:10.5px">(x)</span></div>
<div class="t" style="left:699.4px;top:607.12px;font-size:12.5px;line-height:12.5px;color:#262626;letter-spacing:0.05px;">SUM(weight_ms)</div>
<div class="a" style="left:643px;top:630px;width:263px;height:24px;background:#fff;border:1px dashed #d9d9d9;border-radius:3px;"></div>
<svg class="a" style="left:655px;top:634.5px;" width="11" height="11" viewBox="0 0 11 11"><path d="M5.5 0.5v10M0.5 5.5h10" stroke="#aaa" stroke-width="1.3"/></svg>
<div class="t" style="left:672.2px;top:633.70px;font-size:13px;line-height:13px;color:#b5b5b5;letter-spacing:-0.02px;">Drop columns/metrics here or click</div>
<div class="t" style="left:638.4px;top:677.92px;font-size:12.5px;line-height:12.5px;color:#555;letter-spacing:0.3px;">Dimensions</div>
<div class="a" style="left:638px;top:696.5px;width:273px;height:61px;background:#fff;border:1px solid #e0e0e0;border-radius:4px;"></div>
<div class="a" style="left:643px;top:701.5px;width:263px;height:23px;background:#f0f0f0;border-radius:3px;"></div>
<div class="a" style="left:666px;top:701.5px;width:1px;height:23px;background:#e0e0e0;"></div>
<div class="a" style="left:881px;top:701.5px;width:1px;height:23px;background:#e0e0e0;"></div>
<svg class="a" style="left:650.7px;top:709.0px;" width="9" height="9" viewBox="0 0 9 9"><path d="M1 1l7 7M8 1L1 8" stroke="#999" stroke-width="1.3"/></svg>
<svg class="a" style="left:890.8px;top:708.0px;" width="7" height="10" viewBox="0 0 7 10"><path d="M1.5 1l4 4-4 4" fill="none" stroke="#999" stroke-width="1.3"/></svg>
<div class="t" style="left:674.6px;top:708.79px;font-size:11px;line-height:11px;color:#444;letter-spacing:-0.1px;">abc</div>
<div class="t" style="left:699.3px;top:705.92px;font-size:12.5px;line-height:12.5px;color:#262626;letter-spacing:0.05px;">band</div>
<div class="a" style="left:643px;top:729.5px;width:263px;height:23px;background:#fff;border:1px dashed #d9d9d9;border-radius:3px;"></div>
<svg class="a" style="left:655px;top:733.5px;" width="11" height="11" viewBox="0 0 11 11"><path d="M5.5 0.5v10M0.5 5.5h10" stroke="#aaa" stroke-width="1.3"/></svg>
<div class="t" style="left:672.6px;top:732.70px;font-size:13px;line-height:13px;color:#b5b5b5;letter-spacing:-0.13px;">Drop columns here or click</div>
<div class="t" style="left:638.3px;top:776.62px;font-size:12.5px;line-height:12.5px;color:#555;letter-spacing:0.25px;">Contribution Mode</div>
<div class="a" style="left:638px;top:795.5px;width:273px;height:31px;background:#fff;border:1px solid #d9d9d9;border-radius:4px;"></div>
<div class="t" style="left:650.5px;top:804.03px;font-size:14.5px;line-height:14.5px;color:#262626;letter-spacing:0.3px;">None</div>
<svg class="a" style="left:889px;top:808px;" width="11" height="7" viewBox="0 0 11 7"><path d="M0.8 0.8L5.5 5.8 10.2 0.8" fill="none" stroke="#c4c4c4" stroke-width="1.2"/></svg>
<div class="t" style="left:638.3px;top:846.42px;font-size:12.5px;line-height:12.5px;color:#555;letter-spacing:0.4px;">Filters</div>
<div class="a" style="left:638px;top:863px;width:273px;height:40px;background:#fff;border:1px solid #e0e0e0;border-radius:4px;"></div>
<div class="a" style="left:643px;top:868px;width:263px;height:30px;background:#f0f0f0;border-radius:3px;"></div>
<div class="a" style="left:666px;top:868px;width:1px;height:30px;background:#e0e0e0;"></div>
<div class="a" style="left:881px;top:868px;width:1px;height:30px;background:#e0e0e0;"></div>
<svg class="a" style="left:650.7px;top:875px;" width="9" height="9" viewBox="0 0 9 9"><path d="M1 1l7 7M8 1L1 8" stroke="#999" stroke-width="1.3"/></svg>
<svg class="a" style="left:890.8px;top:874.5px;" width="7" height="10" viewBox="0 0 7 10"><path d="M1.5 1l4 4-4 4" fill="none" stroke="#999" stroke-width="1.3"/></svg>
<div class="t" style="left:671.5px;top:874.42px;font-size:12.5px;line-height:12.5px;color:#999;letter-spacing:0.05px;">date_time (No filter)</div>
<div class="a" style="left:622px;top:878px;width:305px;height:54px;background:linear-gradient(rgba(255,255,255,0) 0px, rgba(255,255,255,0.85) 7px, #fff 12px);"></div>
<div class="a" style="left:704px;top:884px;width:156px;height:32px;background:#e6f4f8;border-radius:4px;"></div>
<div class="t" style="left:745.4px;top:893.96px;font-size:12.8px;line-height:12.8px;color:#1a7895;font-weight:700;letter-spacing:-0.45px;">Update chart</div>
<div class="a" style="left:1472px;top:216px;width:69px;height:24px;background:#f0f0f0;border:1px solid #e0e0e0;border-radius:6px;"></div>
<div class="t" style="left:1483.3px;top:221.40px;font-size:13px;line-height:13px;color:#262626;letter-spacing:0.25px;">63 rows</div>
<div class="a" style="left:1549px;top:216px;width:80px;height:24px;background:#f0f0f0;border:1px solid #e0e0e0;border-radius:6px;"></div>
<div class="t" style="left:1559.3px;top:221.40px;font-size:13px;line-height:13px;color:#1f1f1f;letter-spacing:-0.3px;">Cached</div>
<svg class="a" style="left:1605px;top:221px;" width="14" height="14" viewBox="0 0 14 14"><g fill="none" stroke="#222" stroke-width="1.3"><path d="M12.3 6A5.5 5.5 0 0 0 2 5.2"/><path d="M1.7 8A5.5 5.5 0 0 0 12 8.8"/></g><path d="M13.3 2.3v4.4H8.9z" fill="#222"/><path d="M0.7 11.7V7.3h4.4z" fill="#222"/></svg>
<div class="a" style="left:1638px;top:216px;width:126px;height:24px;background:#eef7f0;border:1px solid #a8dcba;border-radius:6px;"></div>
<svg class="a" style="left:1648px;top:222px;" width="13" height="13" viewBox="0 0 13 13"><g fill="none" stroke="#3a5a48" stroke-width="1.3"><circle cx="6.5" cy="6.5" r="5.6"/><path d="M6.5 3.3v3.4l-1.8 1.6"/></g></svg>
<div class="t" style="left:1669.3px;top:222.41px;font-size:11.6px;line-height:11.6px;color:#1d5632;font-family:'Liberation Mono',monospace;-webkit-text-stroke:0.1px #1d5632;">00:00:01.973</div>
<div class="a" style="left:1062px;top:275.9px;width:682px;height:1px;background:#e6e9f0;"></div>
<div class="t" style="left:1053.5px;top:269.44px;font-size:12px;line-height:12px;color:#6e7079;letter-spacing:0.1px;width:60px;margin-left:-60px;text-align:right;">1B</div>
<div class="a" style="left:1062px;top:332.0px;width:682px;height:1px;background:#e6e9f0;"></div>
<div class="t" style="left:1053.5px;top:325.54px;font-size:12px;line-height:12px;color:#6e7079;letter-spacing:0.1px;width:60px;margin-left:-60px;text-align:right;">800M</div>
<div class="a" style="left:1062px;top:388.0px;width:682px;height:1px;background:#e6e9f0;"></div>
<div class="t" style="left:1053.5px;top:381.54px;font-size:12px;line-height:12px;color:#6e7079;letter-spacing:0.1px;width:60px;margin-left:-60px;text-align:right;">600M</div>
<div class="a" style="left:1062px;top:444.1px;width:682px;height:1px;background:#e6e9f0;"></div>
<div class="t" style="left:1053.5px;top:437.64px;font-size:12px;line-height:12px;color:#6e7079;letter-spacing:0.1px;width:60px;margin-left:-60px;text-align:right;">400M</div>
<div class="a" style="left:1062px;top:500.3px;width:682px;height:1px;background:#e6e9f0;"></div>
<div class="t" style="left:1053.5px;top:493.84px;font-size:12px;line-height:12px;color:#6e7079;letter-spacing:0.1px;width:60px;margin-left:-60px;text-align:right;">200M</div>
<div class="t" style="left:1053.5px;top:549.74px;font-size:12px;line-height:12px;color:#6e7079;width:60px;margin-left:-60px;text-align:right;">0</div>
<div class="a" style="left:1070.08px;top:550.3px;width:36.3px;height:6.7px;background:#1fa8c9;"></div>
<div class="a" style="left:1070.08px;top:548.2px;width:36.3px;height:2.1px;background:#454e7c;"></div>
<div class="a" style="left:1070.08px;top:547.0px;width:36.3px;height:1.2px;background:#e04355;"></div>
<div class="a" style="left:1122.54px;top:524.0px;width:36.3px;height:33.0px;background:#1fa8c9;"></div>
<div class="a" style="left:1122.54px;top:483.7px;width:36.3px;height:40.3px;background:#454e7c;"></div>
<div class="a" style="left:1122.54px;top:476.6px;width:36.3px;height:7.1px;background:#5ac189;"></div>
<div class="a" style="left:1122.54px;top:474.4px;width:36.3px;height:2.2px;background:#fcc700;"></div>
<div class="a" style="left:1175.0px;top:552.7px;width:36.3px;height:4.3px;background:#1fa8c9;"></div>
<div class="a" style="left:1175.0px;top:551.8px;width:36.3px;height:0.9px;background:#454e7c;"></div>
<div class="a" style="left:1175.0px;top:549.6px;width:36.3px;height:2.2px;background:#5ac189;"></div>
<div class="a" style="left:1227.47px;top:553.5px;width:36.3px;height:3.5px;background:#1fa8c9;"></div>
<div class="a" style="left:1227.47px;top:552.2px;width:36.3px;height:1.3px;background:#e04355;"></div>
<div class="a" style="left:1279.93px;top:542.9px;width:36.3px;height:14.1px;background:#1fa8c9;"></div>
<div class="a" style="left:1279.93px;top:478.8px;width:36.3px;height:64.1px;background:#454e7c;"></div>
<div class="a" style="left:1279.93px;top:476.0px;width:36.3px;height:2.8px;background:#5ac189;"></div>
<div class="a" style="left:1279.93px;top:474.7px;width:36.3px;height:1.3px;background:#ff7f44;"></div>
<div class="a" style="left:1279.93px;top:473.3px;width:36.3px;height:1.4px;background:#fcc700;"></div>
<div class="a" style="left:1332.39px;top:555.0px;width:36.3px;height:2.0px;background:#1fa8c9;"></div>
<div class="a" style="left:1332.39px;top:550.8px;width:36.3px;height:4.2px;background:#5ac189;"></div>
<div class="a" style="left:1332.39px;top:549.4px;width:36.3px;height:1.4px;background:#a868b7;"></div>
<div class="a" style="left:1384.85px;top:534.3px;width:36.3px;height:22.7px;background:#5ac189;"></div>
<div class="a" style="left:1437.31px;top:383.7px;width:36.3px;height:173.3px;background:#1fa8c9;"></div>
<div class="a" style="left:1437.31px;top:347.9px;width:36.3px;height:35.8px;background:#454e7c;"></div>
<div class="a" style="left:1437.31px;top:336.2px;width:36.3px;height:11.7px;background:#5ac189;"></div>
<div class="a" style="left:1437.31px;top:331.6px;width:36.3px;height:4.6px;background:#666666;"></div>
<div class="a" style="left:1437.31px;top:330.6px;width:36.3px;height:1.0px;background:#e04355;"></div>
<div class="a" style="left:1489.77px;top:551.4px;width:36.3px;height:5.6px;background:#1fa8c9;"></div>
<div class="a" style="left:1489.77px;top:511.2px;width:36.3px;height:40.2px;background:#454e7c;"></div>
<div class="a" style="left:1489.77px;top:488.0px;width:36.3px;height:23.2px;background:#5ac189;"></div>
<div class="a" style="left:1489.77px;top:483.0px;width:36.3px;height:5.0px;background:#e04355;"></div>
<div class="a" style="left:1489.77px;top:481.4px;width:36.3px;height:1.6px;background:#a868b7;"></div>
<div class="a" style="left:1542.23px;top:555.2px;width:36.3px;height:1.8px;background:#1fa8c9;"></div>
<div class="a" style="left:1542.23px;top:531.8px;width:36.3px;height:23.4px;background:#ff7f44;"></div>
<div class="a" style="left:1594.7px;top:533.9px;width:36.3px;height:23.1px;background:#ff7f44;"></div>
<div class="a" style="left:1594.7px;top:510.8px;width:36.3px;height:23.1px;background:#666666;"></div>
<div class="a" style="left:1647.16px;top:555.8px;width:36.3px;height:1.2px;background:#1fa8c9;"></div>
<div class="a" style="left:1699.62px;top:552.5px;width:36.3px;height:4.5px;background:#1fa8c9;"></div>
<div class="a" style="left:1699.62px;top:550.8px;width:36.3px;height:1.7px;background:#5ac189;"></div>
<div class="a" style="left:1062px;top:556.6px;width:682px;height:1.1px;background:#6e7079;"></div>
<div class="a" style="left:1061.5px;top:557px;width:1px;height:5px;background:#6e7079;"></div>
<div class="a" style="left:1166.42px;top:557px;width:1px;height:5px;background:#6e7079;"></div>
<div class="a" style="left:1271.35px;top:557px;width:1px;height:5px;background:#6e7079;"></div>
<div class="a" style="left:1376.27px;top:557px;width:1px;height:5px;background:#6e7079;"></div>
<div class="a" style="left:1481.19px;top:557px;width:1px;height:5px;background:#6e7079;"></div>
<div class="a" style="left:1586.12px;top:557px;width:1px;height:5px;background:#6e7079;"></div>
<div class="a" style="left:1691.04px;top:557px;width:1px;height:5px;background:#6e7079;"></div>
<div class="a" style="left:1743.5px;top:557px;width:1px;height:5px;background:#6e7079;"></div>
<div class="t" style="left:1088.23px;top:564.59px;font-size:12.3px;line-height:12.3px;color:#6e7079;letter-spacing:0.25px;width:120px;margin-left:-60.0px;text-align:center;">A1</div>
<div class="t" style="left:1193.15px;top:564.59px;font-size:12.3px;line-height:12.3px;color:#6e7079;letter-spacing:0.25px;width:120px;margin-left:-60.0px;text-align:center;">K-Telecom</div>
<div class="t" style="left:1298.08px;top:564.59px;font-size:12.3px;line-height:12.3px;color:#6e7079;letter-spacing:0.25px;width:120px;margin-left:-60.0px;text-align:center;">MegaFon</div>
<div class="t" style="left:1403.0px;top:564.59px;font-size:12.3px;line-height:12.3px;color:#6e7079;letter-spacing:0.25px;width:120px;margin-left:-60.0px;text-align:center;">MobiUZ</div>
<div class="t" style="left:1507.92px;top:564.59px;font-size:12.3px;line-height:12.3px;color:#6e7079;letter-spacing:0.25px;width:120px;margin-left:-60.0px;text-align:center;">Tele2</div>
<div class="t" style="left:1612.85px;top:564.59px;font-size:12.3px;line-height:12.3px;color:#6e7079;letter-spacing:0.25px;width:120px;margin-left:-60.0px;text-align:center;">Unitel</div>
<div class="t" style="left:1717.77px;top:564.59px;font-size:12.3px;line-height:12.3px;color:#6e7079;letter-spacing:0.25px;width:120px;margin-left:-60.0px;text-align:center;">Volna Mobile</div>
<div class="a" style="left:979px;top:596.3px;width:25px;height:13.4px;background:#1fa8c9;border-radius:3px;"></div>
<div class="t" style="left:1009px;top:595.09px;font-size:12.3px;line-height:12.3px;color:#3a3a3a;letter-spacing:0.22px;">LTE FDD 1800 band 3</div>
<div class="a" style="left:1144px;top:596.3px;width:25px;height:13.4px;background:#454e7c;border-radius:3px;"></div>
<div class="t" style="left:1174px;top:595.09px;font-size:12.3px;line-height:12.3px;color:#3a3a3a;letter-spacing:0.22px;">LTE FDD 2600 band 7</div>
<div class="a" style="left:1309px;top:596.3px;width:25px;height:13.4px;background:#5ac189;border-radius:3px;"></div>
<div class="t" style="left:1339px;top:595.09px;font-size:12.3px;line-height:12.3px;color:#3a3a3a;letter-spacing:0.22px;">LTE FDD 2100 band 1</div>
<div class="a" style="left:1474px;top:596.3px;width:25px;height:13.4px;background:#ff7f44;border-radius:3px;"></div>
<div class="t" style="left:1504px;top:595.09px;font-size:12.3px;line-height:12.3px;color:#3a3a3a;letter-spacing:0.22px;">LTE TDD 2496-2690</div>
<svg class="a" style="left:1632px;top:596px;" width="10" height="14" viewBox="0 0 10 14"><path d="M9.5 0.5v13L0.5 7z" fill="#aaa"/></svg>
<div class="t" style="left:1651.4px;top:595.59px;font-size:12.3px;line-height:12.3px;color:#333;letter-spacing:0.2px;">1/5</div>
<svg class="a" style="left:1680px;top:596px;" width="10" height="14" viewBox="0 0 10 14"><path d="M0.5 0.5v13L9.5 7z" fill="#2f4554"/></svg>
<div class="a" style="left:1699px;top:593.5px;width:25px;height:19px;background:#fff;border:1px solid #555;border-radius:10px;"></div>
<div class="t" style="left:1704px;top:596.84px;font-size:12px;line-height:12px;color:#555;letter-spacing:0.1px;">All</div>
<div class="a" style="left:1731px;top:593.5px;width:28px;height:19px;background:#fff;border:1px solid #555;border-radius:10px;"></div>
<div class="t" style="left:1736.5px;top:596.84px;font-size:12px;line-height:12px;color:#555;letter-spacing:0.1px;">Inv</div>
<div class="a" style="left:1350px;top:637px;width:37px;height:1px;background:#d9d9d9;"></div>
<div class="a" style="left:1350px;top:641px;width:37px;height:1px;background:#d9d9d9;"></div>
<div class="t" style="left:959px;top:661.40px;font-size:13px;line-height:13px;color:#262626;letter-spacing:-0.25px;">Results</div>
<div class="t" style="left:1032.3px;top:661.40px;font-size:13px;line-height:13px;color:#262626;letter-spacing:-0.3px;">Samples</div>
<div class="a" style="left:959px;top:689px;width:820px;height:1px;background:#f0f0f0;"></div>
<div class="a" style="left:959px;top:687.8px;width:41px;height:2.2px;background:#454e7c;"></div>
<svg class="a" style="left:1761px;top:660px;" width="12" height="8" viewBox="0 0 12 8"><path d="M1 7L6 2l5 5" fill="none" stroke="#333" stroke-width="1.5"/></svg>
<div class="a" style="left:959px;top:705.5px;width:200px;height:35px;background:#fff;border:1px solid #20a7c9;border-radius:4px;box-shadow:0 0 0 2px rgba(32,167,201,0.2);"></div>
<svg class="a" style="left:975px;top:715px;" width="17" height="17" viewBox="0 0 17 17"><g fill="none" stroke="#555" stroke-width="2"><circle cx="7" cy="7" r="5.8"/><path d="M11.2 11.2l4.8 4.8"/></g></svg>
<div class="t" style="left:999.1px;top:716.18px;font-size:14.2px;line-height:14.2px;color:#bfbfbf;letter-spacing:0.2px;">Search</div>
<div class="a" style="left:1687px;top:712px;width:68px;height:22px;background:#f0f0f0;border:1px solid #e0e0e0;border-radius:6px;"></div>
<div class="t" style="left:1697.5px;top:717.30px;font-size:13px;line-height:13px;color:#262626;letter-spacing:0.25px;">13 rows</div>
<svg class="a" style="left:1764px;top:715px;" width="14" height="16" viewBox="0 0 14 16"><g fill="none" stroke="#666" stroke-width="1.3"><path d="M4 3.5h8.5v11.8H4z"/><path d="M1.5 1v11.5L4 14.5M1.5 1h8.5l2 2.2"/></g></svg>
<div class="t" style="left:975.5px;top:762.12px;font-size:12.5px;line-height:12.5px;color:#1a1a1a;letter-spacing:0.15px;-webkit-text-stroke:0.25px #1a1a1a;">operator_name</div>
<svg class="a" style="left:1071.5px;top:763px;" width="6" height="10" viewBox="0 0 6 10"><path d="M3 0.5L5.5 3.8H0.5z" fill="#ccc"/><path d="M3 9.5L5.5 6.2H0.5z" fill="#ccc"/></svg>
<div class="t" style="left:1102.3px;top:762.12px;font-size:12.5px;line-height:12.5px;color:#1a1a1a;letter-spacing:0.15px;-webkit-text-stroke:0.25px #1a1a1a;word-spacing:-0.8px;">LTE FDD</div>
<svg class="a" style="left:1160.2px;top:763px;" width="6" height="10" viewBox="0 0 6 10"><path d="M3 0.5L5.5 3.8H0.5z" fill="#ccc"/><path d="M3 9.5L5.5 6.2H0.5z" fill="#ccc"/></svg>
<div class="t" style="left:1191.3px;top:762.12px;font-size:12.5px;line-height:12.5px;color:#1a1a1a;letter-spacing:0.15px;-webkit-text-stroke:0.25px #1a1a1a;">LTE FDD 1800 band 3</div>
<svg class="a" style="left:1326.2px;top:763px;" width="6" height="10" viewBox="0 0 6 10"><path d="M3 0.5L5.5 3.8H0.5z" fill="#ccc"/><path d="M3 9.5L5.5 6.2H0.5z" fill="#ccc"/></svg>
<div class="t" style="left:1357.3px;top:762.12px;font-size:12.5px;line-height:12.5px;color:#1a1a1a;letter-spacing:0.15px;-webkit-text-stroke:0.25px #1a1a1a;">LTE FDD 1900 band 2</div>
<svg class="a" style="left:1492.2px;top:763px;" width="6" height="10" viewBox="0 0 6 10"><path d="M3 0.5L5.5 3.8H0.5z" fill="#ccc"/><path d="M3 9.5L5.5 6.2H0.5z" fill="#ccc"/></svg>
<div class="t" style="left:1523.2px;top:762.12px;font-size:12.5px;line-height:12.5px;color:#1a1a1a;letter-spacing:0.15px;-webkit-text-stroke:0.25px #1a1a1a;">LTE FDD 2100 band 1</div>
<svg class="a" style="left:1658.1px;top:763px;" width="6" height="10" viewBox="0 0 6 10"><path d="M3 0.5L5.5 3.8H0.5z" fill="#ccc"/><path d="M3 9.5L5.5 6.2H0.5z" fill="#ccc"/></svg>
<div class="t" style="left:1689.2px;top:762.12px;font-size:12.5px;line-height:12.5px;color:#1a1a1a;letter-spacing:0.15px;-webkit-text-stroke:0.25px #1a1a1a;">LTE FDD 260</div>
<div class="a" style="left:959px;top:780px;width:806px;height:2px;background:#e0e0e0;"></div>
<div class="t" style="left:975.5px;top:790.42px;font-size:12.5px;line-height:12.5px;color:#262626;letter-spacing:0.2px;">A1</div>
<div class="t" style="left:1102.3px;top:790.42px;font-size:12.5px;line-height:12.5px;color:#b2b2b2;letter-spacing:0.2px;">N/A</div>
<div class="t" style="left:1191.3px;top:790.42px;font-size:12.5px;line-height:12.5px;color:#262626;letter-spacing:0.9px;">24090578</div>
<div class="t" style="left:1357.3px;top:790.42px;font-size:12.5px;line-height:12.5px;color:#b2b2b2;letter-spacing:0.2px;">N/A</div>
<div class="t" style="left:1523.2px;top:790.42px;font-size:12.5px;line-height:12.5px;color:#b2b2b2;letter-spacing:0.2px;">N/A</div>
<div class="t" style="left:1689.2px;top:790.42px;font-size:12.5px;line-height:12.5px;color:#262626;letter-spacing:0.9px;">8556266</div>
<div class="a" style="left:959px;top:809px;width:806px;height:1px;background:#e8e8e8;"></div>
<div class="t" style="left:975.5px;top:817.92px;font-size:12.5px;line-height:12.5px;color:#262626;letter-spacing:0.2px;">Beeline</div>
<div class="t" style="left:1102.3px;top:817.92px;font-size:12.5px;line-height:12.5px;color:#b2b2b2;letter-spacing:0.2px;">N/A</div>
<div class="t" style="left:1191.3px;top:817.92px;font-size:12.5px;line-height:12.5px;color:#262626;letter-spacing:0.9px;">119305393</div>
<div class="t" style="left:1357.3px;top:817.92px;font-size:12.5px;line-height:12.5px;color:#b2b2b2;letter-spacing:0.2px;">N/A</div>
<div class="t" style="left:1523.2px;top:817.92px;font-size:12.5px;line-height:12.5px;color:#262626;letter-spacing:0.9px;">25699750</div>
<div class="t" style="left:1689.2px;top:817.92px;font-size:12.5px;line-height:12.5px;color:#262626;letter-spacing:0.9px;">143572387</div>
<div class="a" style="left:959px;top:838px;width:806px;height:1px;background:#e8e8e8;"></div>
<div class="t" style="left:975.5px;top:846.72px;font-size:12.5px;line-height:12.5px;color:#262626;letter-spacing:0.2px;">K-Telecom</div>
<div class="t" style="left:1102.3px;top:846.72px;font-size:12.5px;line-height:12.5px;color:#262626;letter-spacing:0.9px;">118</div>
<div class="t" style="left:1191.3px;top:846.72px;font-size:12.5px;line-height:12.5px;color:#262626;letter-spacing:0.9px;">17488310</div>
<div class="t" style="left:1357.3px;top:846.72px;font-size:12.5px;line-height:12.5px;color:#b2b2b2;letter-spacing:0.2px;">N/A</div>
<div class="t" style="left:1523.2px;top:846.72px;font-size:12.5px;line-height:12.5px;color:#262626;letter-spacing:0.9px;">3992862</div>
<div class="t" style="left:1689.2px;top:846.72px;font-size:12.5px;line-height:12.5px;color:#262626;letter-spacing:0.9px;">4321305</div>
<div class="a" style="left:959px;top:866px;width:806px;height:1px;background:#e8e8e8;"></div>
<div class="t" style="left:975.5px;top:874.92px;font-size:12.5px;line-height:12.5px;color:#262626;letter-spacing:0.2px;">Life</div>
<div class="t" style="left:1102.3px;top:874.92px;font-size:12.5px;line-height:12.5px;color:#b2b2b2;letter-spacing:0.2px;">N/A</div>
<div class="t" style="left:1191.3px;top:874.92px;font-size:12.5px;line-height:12.5px;color:#262626;letter-spacing:0.9px;">12668791</div>
<div class="t" style="left:1357.3px;top:874.92px;font-size:12.5px;line-height:12.5px;color:#b2b2b2;letter-spacing:0.2px;">N/A</div>
<div class="t" style="left:1523.2px;top:874.92px;font-size:12.5px;line-height:12.5px;color:#b2b2b2;letter-spacing:0.2px;">N/A</div>
<div class="t" style="left:1689.2px;top:874.92px;font-size:12.5px;line-height:12.5px;color:#262626;letter-spacing:0.9px;">3058060</div>
<div class="a" style="left:959px;top:894.5px;width:806px;height:1px;background:#e8e8e8;"></div>
<div class="a" style="left:1765px;top:760px;width:0;height:0"></div>
<div class="a" style="left:1764.5px;top:748px;width:14.5px;height:153px;background:#fafafa;"></div>
<svg class="a" style="left:1768px;top:754px;" width="9" height="6" viewBox="0 0 9 6"><path d="M0 6L4.5 0.5 9 6z" fill="#8c8c8c"/></svg>
<div class="a" style="left:1768px;top:766px;width:8px;height:44px;background:#8c8c8c;border-radius:4px;"></div>
<svg class="a" style="left:1768px;top:889px;" width="9" height="6" viewBox="0 0 9 6"><path d="M0 0L4.5 5.5 9 0z" fill="#8c8c8c"/></svg>
<div class="a" style="left:959px;top:900.5px;width:820px;height:15px;background:#fafafa;"></div>
<svg class="a" style="left:963.5px;top:904px;" width="6" height="9" viewBox="0 0 6 9"><path d="M6 0v9L0.5 4.5z" fill="#8c8c8c"/></svg>
<div class="a" style="left:976.5px;top:904px;width:254.5px;height:9px;background:#8c8c8c;border-radius:5px;"></div>
<svg class="a" style="left:1752.5px;top:904px;" width="6" height="9" viewBox="0 0 6 9"><path d="M0 0v9l5.5-4.5z" fill="#8c8c8c"/></svg>
</body></html>
